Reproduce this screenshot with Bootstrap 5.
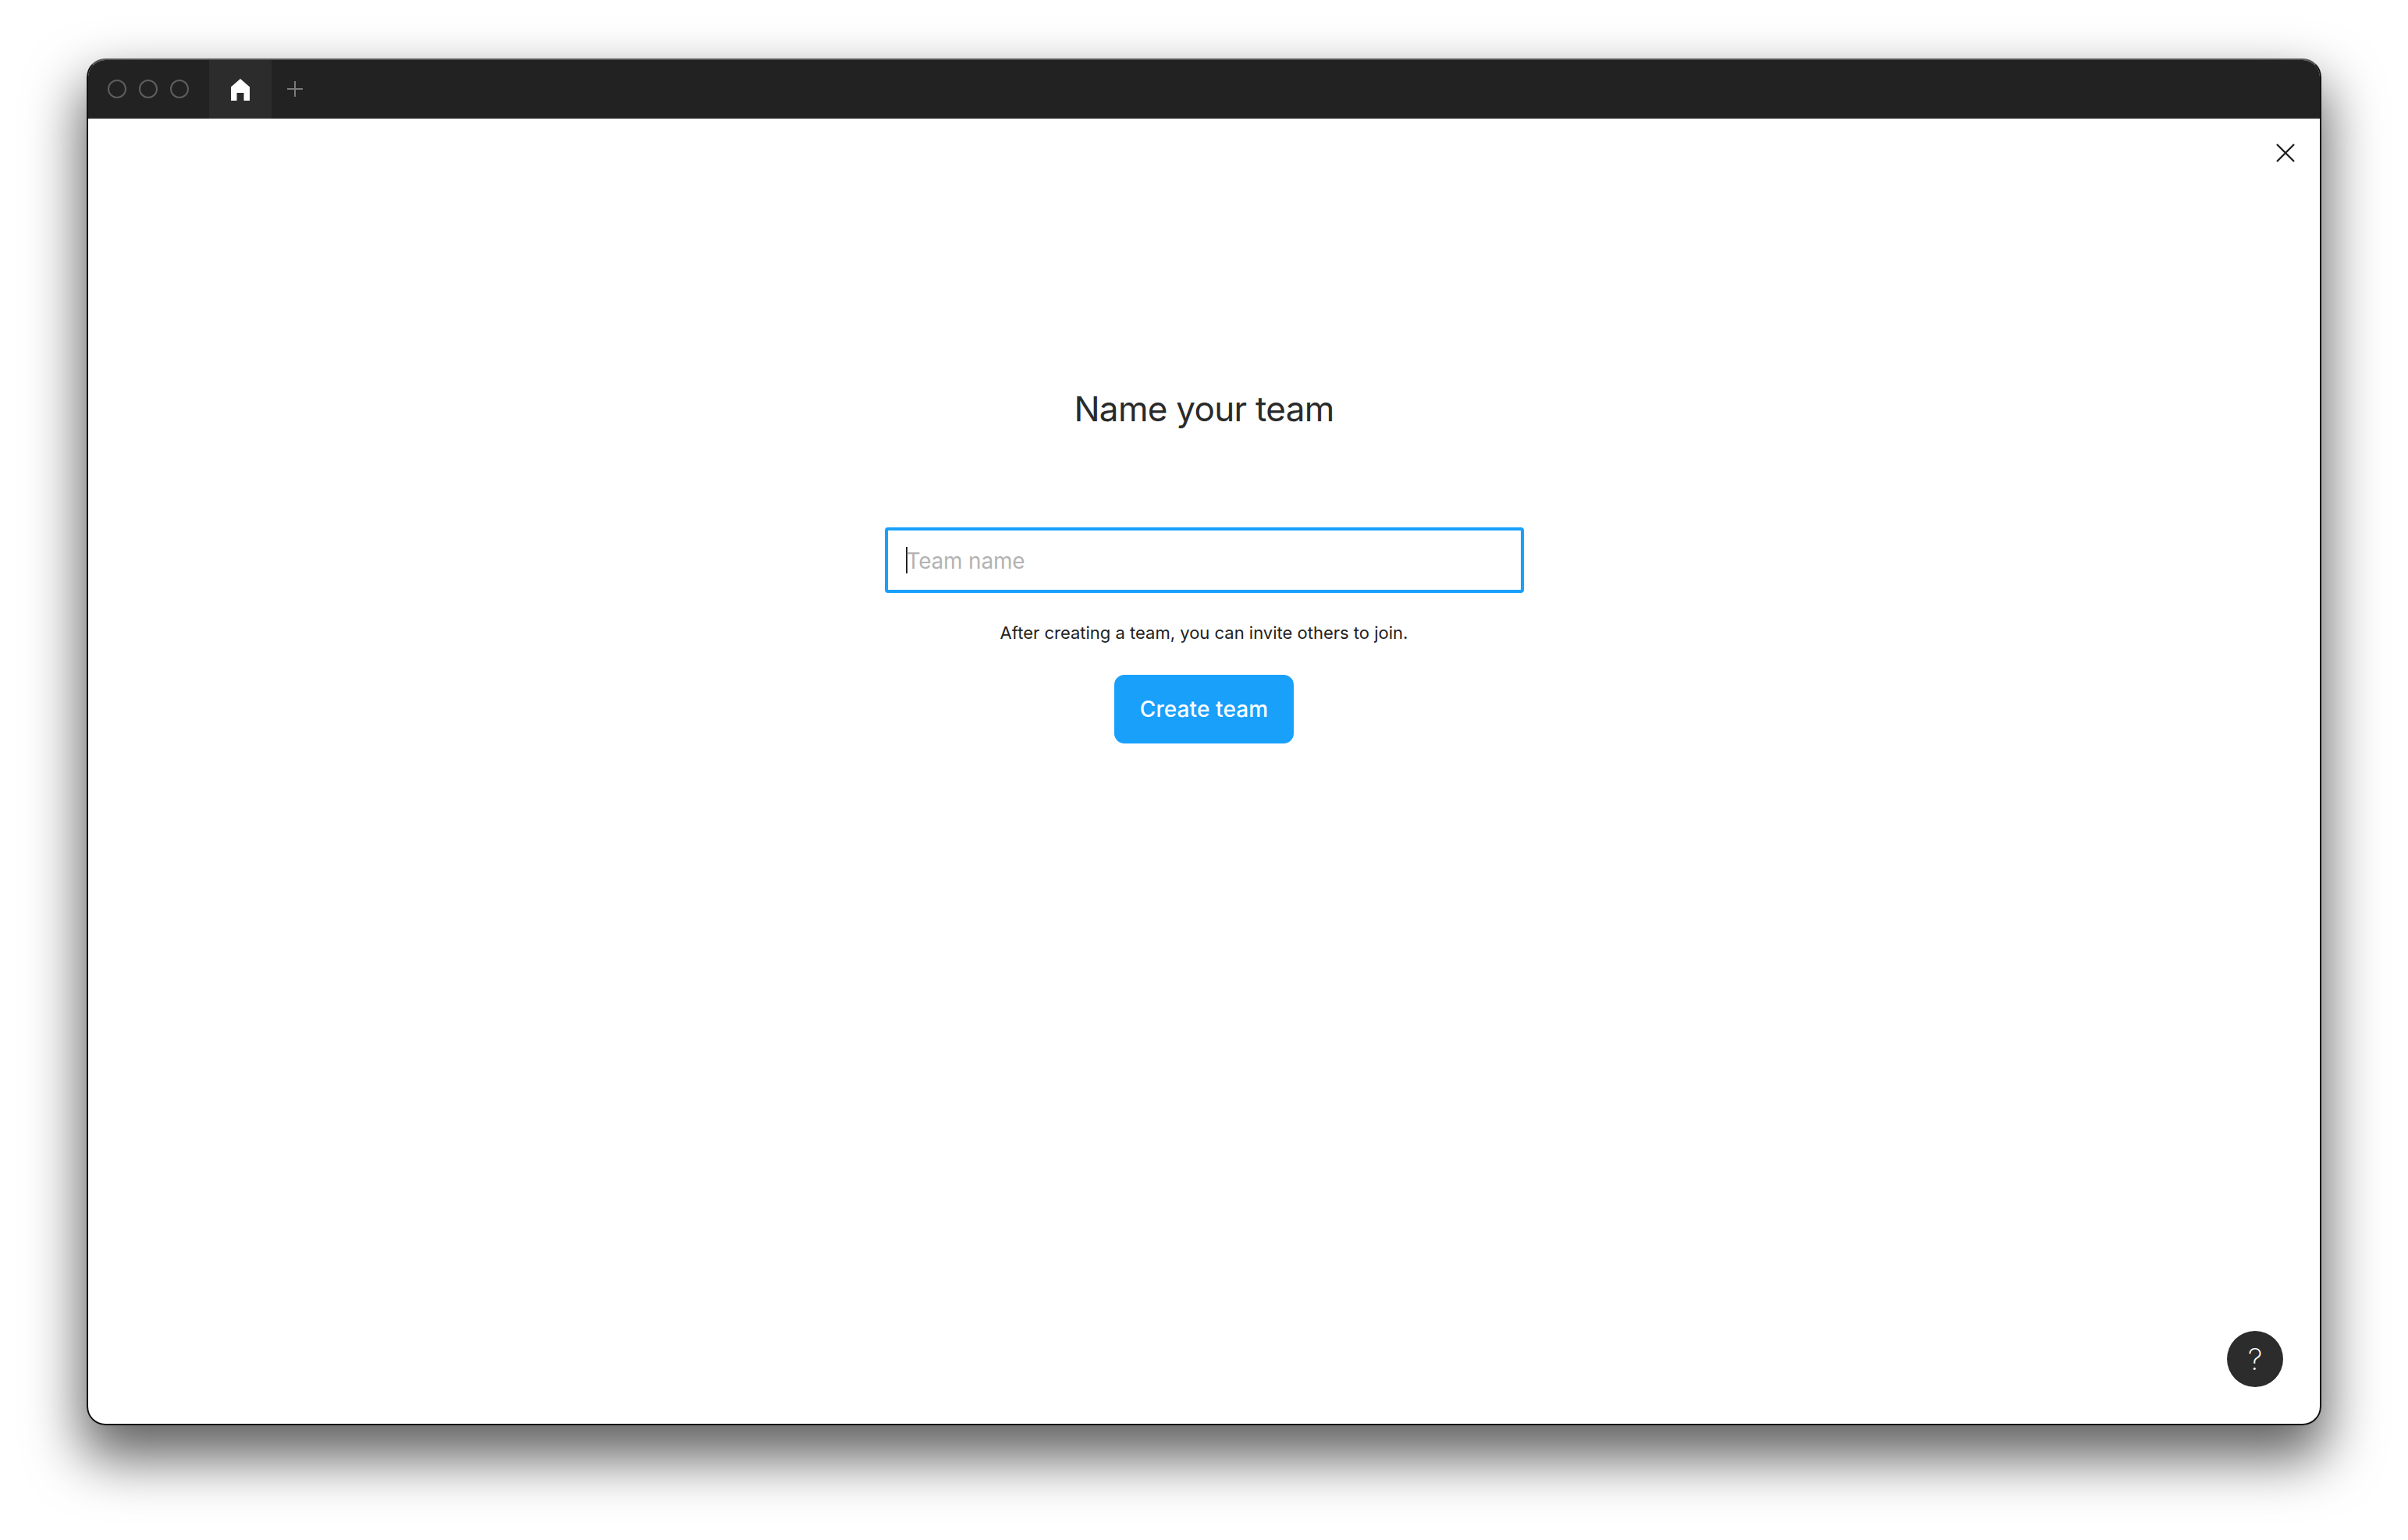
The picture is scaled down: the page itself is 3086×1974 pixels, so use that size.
<!DOCTYPE html>
<html lang="en">
<head>
    <meta charset="UTF-8">
    <meta name="viewport" content="width=device-width, initial-scale=1">
    <title>Name your team</title>

    <link href="https://cdn.jsdelivr.net/npm/bootstrap@5.3.0/dist/css/bootstrap.min.css" rel="stylesheet">

    <style>
        body {
            font-family: "Inter", "Liberation Sans", sans-serif;
            background-color: #ffffff;
            color: #222222;
            height: 1974px;
            padding: 75px 111px 147px 111px;
            overflow: hidden;
        }
        .app-window {
            height: 100%;
            border-radius: 24px;
            overflow: hidden;
            background: #ffffff;
            border: 2px solid #111111;
            border-top-color: #555555;
            position: relative;
        }
        .window-shadow {
            height: 100%;
            border-radius: 24px;
            box-shadow: 0 36px 70px 6px rgba(0, 0, 0, 0.62);
        }

        /* title bar */
        .title-bar {
            height: 75px;
            padding-bottom: 1px;
            background: #222222;
        }
        .traffic-dots {
            width: 155px;
            padding-left: 25px;
            gap: 16px;
        }
        .traffic-dot {
            width: 24px;
            height: 24px;
            border: 2px solid #5e5e5e;
            border-radius: 50%;
        }
        .home-tab {
            width: 80px;
            margin-bottom: -1px;
            background: #2c2c2c;
        }
        .new-tab {
            width: 60px;
        }

        /* form */
        .form-area {
            padding-top: 344px;
        }
        .team-title {
            font-size: 44px;
            font-weight: 400;
            line-height: 56px;
            letter-spacing: -0.7px;
            margin-bottom: 0;
            color: #2a2a2a;
        }
        .team-field {
            width: 819px;
            height: 84px;
            margin-top: 124px;
            border: 4px solid #18a0fb;
            border-radius: 4px;
            padding-left: 23px;
            padding-top: 2px;
            color: #b3b3b3;
            font-size: 28px;
            line-height: 34px;
            letter-spacing: -0.2px;
        }
        .field-caret {
            width: 2px;
            height: 34px;
            margin-top: -2px;
            background: #222222;
            margin-right: -1px;
        }
        .team-hint {
            font-size: 22px;
            line-height: 28px;
            margin-top: 37px;
            margin-bottom: 0;
            color: #222222;
        }
        .create-btn {
            width: 230px;
            height: 88px;
            margin-top: 40px;
            background: #18a0fb;
            border: none;
            border-radius: 13px;
            color: #ffffff;
            font-size: 28px;
            font-weight: 500;
            letter-spacing: 0.1px;
        }

        /* things over the canvas */
        .close-btn {
            position: absolute;
            top: 107px;
            right: 32px;
            line-height: 0;
        }
        .help-btn {
            position: absolute;
            right: 47px;
            bottom: 47px;
            width: 72px;
            height: 72px;
            border-radius: 50%;
            background: #2c2c2c;
            color: #ffffff;
            font-size: 38px;
            font-weight: 200;
        }
    </style>
</head>
<body>

<div class="window-shadow">
    <div class="app-window">
        <div class="title-bar d-flex align-items-stretch">
            <div class="traffic-dots d-flex align-items-center">
                <span class="traffic-dot"></span>
                <span class="traffic-dot"></span>
                <span class="traffic-dot"></span>
            </div>
            <div class="home-tab d-flex align-items-center justify-content-center">
                <svg width="24" height="28" viewBox="0 0 24 28"><path fill="#ffffff" d="M12 0 L24 10.5 V28 H16.5 V18 H7.5 V28 H0 V10.5 Z"/></svg>
            </div>
            <div class="new-tab d-flex align-items-center justify-content-center">
                <svg width="20" height="20" viewBox="0 0 20 20"><path stroke="#7a7a7a" stroke-width="2" fill="none" d="M10 0 V20 M0 10 H20"/></svg>
            </div>
        </div>

        <a class="close-btn" href="#" aria-label="Close">
            <svg width="24" height="24" viewBox="0 0 24 24"><path stroke="#222222" stroke-width="2.4" fill="none" d="M1 1 L23 23 M23 1 L1 23"/></svg>
        </a>

        <div class="form-area d-flex flex-column align-items-center">
            <h1 class="team-title">Name your team</h1>
            <div class="team-field d-flex align-items-center">
                <span class="field-caret"></span>
                <span>Team name</span>
            </div>
            <p class="team-hint">After creating a team, you can invite others to join.</p>
            <button type="button" class="btn create-btn">Create team</button>
        </div>

        <div class="help-btn d-flex align-items-center justify-content-center">?</div>
    </div>
</div>

<script src="https://cdn.jsdelivr.net/npm/bootstrap@5.3.0/dist/js/bootstrap.bundle.min.js"></script>
</body>
</html>
